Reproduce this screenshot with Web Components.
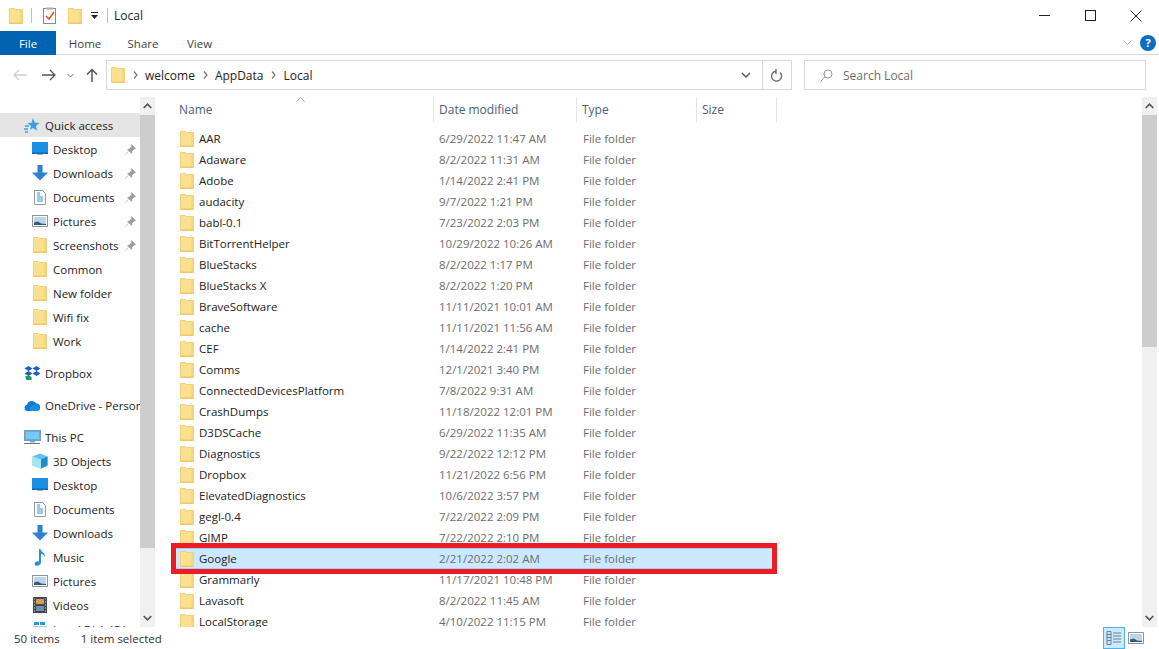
<!DOCTYPE html>
<html><head><meta charset="utf-8">
<style>
html,body{margin:0;padding:0;background:#fff;overflow:hidden}
body{font-family:"Open Sans","Noto Sans","Liberation Sans",sans-serif;font-size:11.5px;color:#1b1b1b}
fe-window{width:1159px;height:649px}
</style></head><body>
<fe-window></fe-window>
<script>
const ICONS={
folder:(w=14,h=18)=>`<svg width="${w}" height="${h}" viewBox="0 0 14 18"><path d="M.5 1.5h5l.8 1h7.2v14H.5z" fill="#fbe08f" stroke="#efd27e"/><path d="M11.5 3v13.5h2V3z" fill="#f6d478"/><path d="M.5 15.5h13v1.5H.5z" fill="#eec766"/></svg>`,
star:`<svg width="16" height="16" viewBox="0 0 16 16"><path d="M9 1l1.8 4.6 4.7.3-3.6 3 1.2 4.8L9 11l-2 1.3-1 .2L7 9 3.5 6l4-.3z" fill="#3b9fe8"/><path d="M1 9h4M0 12h4M1 15h3" stroke="#3b9fe8" stroke-width="1.4"/></svg>`,
desktop:`<svg width="16" height="14" viewBox="0 0 16 14"><rect width="16" height="11.5" fill="#1a8fe6"/><rect y="10.5" width="16" height="1.5" fill="#0c6cb8"/><rect x="5" y="12" width="6" height="1" fill="#7fb5dd"/></svg>`,
down:`<svg width="16" height="16" viewBox="0 0 16 16"><path d="M5.5 0h5v7.5H16L8 15.5 0 7.5h5.500z" fill="#2f7fd0"/></svg>`,
doc:`<svg width="12" height="15" viewBox="0 0 12 15"><path d="M.5.500h8l3 3v11H.5z" fill="#fff" stroke="#8d99a6"/><path d="M3 5h3M3 7h6M3 9h6M3 11h6" stroke="#3a8fd6"/><path d="M3 3h3" stroke="#3a8fd6"/></svg>`,
pic:`<svg width="16" height="12" viewBox="0 0 16 12"><rect x=".5" y=".5" width="15" height="11" fill="#fff" stroke="#8f979f"/><rect x="2" y="2" width="12" height="8" fill="#bcd5ec"/><path d="M2 10V7.500l4-1 3 2 5 .5v1z" fill="#36597c"/></svg>`,
pin:`<svg width="11" height="11" viewBox="0 0 11 11"><path d="M6.500.500l4 4-1.500.5-2.200 2.400-.3 2-4-4 2-.3L6.900 2.400zM3 7.500L.5 10.500" fill="#9b9b9b" stroke="#9b9b9b" stroke-width=".7"/></svg>`,
dropbox:`<svg width="17" height="14" viewBox="0 0 17 14"><path d="M4.500 0l4 2.500-4 2.500-4-2.500zM12.500 0l4 2.500-4 2.500-4-2.500zM4.500 5l4 2.500-4 2.500-4-2.500zM12.500 5l4 2.500-4 2.500-4-2.500z" fill="#1f5fc4"/><path d="M1 10.500l3.500-1 3 1.500v3H2.500z" fill="#1d9a56"/></svg>`,
cloud:`<svg width="17" height="11" viewBox="0 0 17 11"><path d="M3.500 11A3.200 3.200 0 0 1 3 4.700 5 5 0 0 1 12.200 3.600 3.800 3.800 0 0 1 13.500 11z" fill="#0f78d4"/><path d="M7 11a2.400 2.400 0 0 1 .5-4.500 4 4 0 0 1 5-1.500 3.200 3.200 0 0 1 1 6z" fill="#1c8fe3"/></svg>`,
pc:`<svg width="17" height="15" viewBox="0 0 17 15"><rect x=".5" y=".5" width="16" height="10" fill="#4fb1f0" stroke="#7c9cb5"/><rect x="2" y="2" width="13" height="7" fill="#79c8f7"/><path d="M6 11h5v1.500H6z" fill="#8ea3b4"/><path d="M0 13.500h16" stroke="#5f7890"/></svg>`,
cube:`<svg width="16" height="16" viewBox="0 0 16 16"><path d="M8 .5l7.500 3v9L9 15.500 .5 12.500v-9z" fill="#5cc4ec"/><path d="M.5 3.500l8.500 3v9l-8.500-3z" fill="#a5e3f5"/><path d="M9 6.500l6.500-3v9L9 15.500z" fill="#1a8ec9"/></svg>`,
music:`<svg width="12" height="17" viewBox="0 0 12 17"><path d="M5 0h1.500c.3 3 5 3.500 4.500 8-.8-2-2.500-3-4-3.500V13c0 2.500-2 3.800-4 3.800S0 15.500.8 14c.8-1.500 2.800-2 4.200-1.500z" fill="#2a8fe0"/></svg>`,
video:`<svg width="14" height="16" viewBox="0 0 14 16"><rect width="14" height="16" fill="#3c4751"/><rect x="3" y="2" width="8" height="5" fill="#d99c4a"/><rect x="3" y="9" width="8" height="5" fill="#6f8fa8"/><path d="M1 2h1M1 5h1M1 8h1M1 11h1M1 14h1M12 2h1M12 5h1M12 8h1M12 11h1M12 14h1" stroke="#ddd"/></svg>`,
disk:`<svg width="16" height="14" viewBox="0 0 16 14"><rect x="1" y="4" width="14" height="8" fill="#b9c4cc"/><path d="M2 0h5v3H2zM8 0h5v3H8z" fill="#2a9be0"/></svg>`
};
function def(name,css,html,extra){
  customElements.define(name,class extends HTMLElement{
    constructor(){super();const s=this.attachShadow({mode:'open'});s.innerHTML=`<style>${css}</style>${typeof html==='function'?html(this):html}`;}
    connectedCallback(){if(extra)extra(this)}
  });
}
def('fe-icon',':host{display:inline-flex;align-items:center;justify-content:center;flex:none}','',el=>{
  const n=el.getAttribute('name');const v=ICONS[n];el.shadowRoot.innerHTML+=typeof v==='function'?v():v;
});
def('fe-titlebar',`
:host{display:flex;height:31px;align-items:center;padding-left:9px;box-sizing:border-box;color:#222}
.sep{width:1px;height:15px;background:#bfbfbf}
.title{margin-left:6px;font-size:12px;position:relative}
.win{margin-left:auto;display:flex;height:31px}
.win span{width:46px;display:flex;align-items:center;justify-content:center}
`,`
<fe-icon name="folder"></fe-icon><span class="sep" style="margin-left:8px"></span>
<svg style="margin-left:11px" width="14" height="17" viewBox="0 0 14 17"><rect x=".5" y="1.500" width="12" height="15" fill="#fff" stroke="#8a8a8a"/><rect x="3" y=".5" width="7" height="2" fill="#aaa"/><path d="M3 9l3 3 5-7" fill="none" stroke="#d0542b" stroke-width="1.500"/></svg>
<fe-icon name="folder" style="margin-left:11px"></fe-icon>
<svg style="margin-left:8px" width="9" height="9" viewBox="0 0 9 9"><path d="M1 1.500h7" stroke="#222"/><path d="M1 4h7L4.500 8z" fill="#222"/></svg>
<span class="sep" style="margin-left:8px"></span>
<span class="title"><slot></slot></span>
<div class="win">
<span><svg width="11" height="11" viewBox="0 0 11 11"><path d="M0 5.500h11" stroke="#222"/></svg></span>
<span><svg width="11" height="11" viewBox="0 0 11 11"><rect x=".5" y=".5" width="10" height="10" fill="none" stroke="#222"/></svg></span>
<span><svg width="12" height="12" viewBox="0 0 12 12"><path d="M.5.5l11 11M11.500.5l-11 11" stroke="#222"/></svg></span>
</div>`);
def('fe-ribbon',`
:host{display:flex;height:24px;box-sizing:border-box;border-bottom:1px solid #dadada;align-items:stretch}
.file{width:56px;background:#0063b1;color:#fff;display:flex;align-items:center;justify-content:center;height:24px}
.tab{display:flex;align-items:center;justify-content:center;color:#444;height:24px}
.r{margin-left:auto;display:flex;align-items:center;padding-right:3px;gap:8px;height:24px}
`,`
<div class="file">File</div>
<div class="tab" style="width:58px">Home</div>
<div class="tab" style="width:58px">Share</div>
<div class="tab" style="width:55px">View</div>
<div class="r"><svg width="9" height="6" viewBox="0 0 9 6"><path d="M.5.500l4 4 4-4" fill="none" stroke="#b5b5b5"/></svg>
<svg width="16" height="16" viewBox="0 0 16 16"><circle cx="8" cy="8" r="8" fill="#0f6cc4"/><text x="8" y="12" text-anchor="middle" font-family="Open Sans" font-weight="700" font-size="11" fill="#fff">?</text></svg></div>`);
def('fe-crumb',`:host{display:inline-flex;align-items:center;color:#222;font-size:12px}
svg{margin:0 7px 0 8px}`,`<svg width="5" height="8" viewBox="0 0 5 8"><path d="M1 .5l3 3.500-3 3.500" fill="none" stroke="#777" stroke-width="1.200"/></svg><slot></slot>`);
def('fe-addressbar',`
:host{display:flex;height:42px;box-sizing:border-box;align-items:flex-start;padding-top:5px}
.nav{width:106px;height:30px;display:flex;align-items:center;flex:none}
.box{height:30px;width:686px;box-sizing:border-box;border:1px solid #d9d9d9;display:flex;align-items:center;flex:none}
.crumbs{display:flex;align-items:center;flex:1;padding-left:4px}
.dd{width:34px;height:28px;display:flex;align-items:center;justify-content:center;border-right:1px solid #d9d9d9;box-sizing:border-box}
.ref{width:28px;display:flex;align-items:center;justify-content:center}
.search{margin-left:12px;width:342px;height:30px;box-sizing:border-box;border:1px solid #d9d9d9;display:flex;align-items:center;color:#6d6d6d;font-size:12px;padding-left:15px;gap:10px}
`,`
<div class="nav">
<svg style="margin-left:13px" width="14" height="12" viewBox="0 0 14 12"><path d="M14 6H1.500M6 1L1 6l5 5" fill="none" stroke="#cfcfcf" stroke-width="1.300"/></svg>
<svg style="margin-left:15px" width="14" height="12" viewBox="0 0 14 12"><path d="M0 6h12.500M8 1l5 5-5 5" fill="none" stroke="#555" stroke-width="1.300"/></svg>
<svg style="margin-left:11px" width="7" height="5" viewBox="0 0 7 5"><path d="M.5 1l3 3 3-3" fill="none" stroke="#777"/></svg>
<svg style="margin-left:12px" width="12" height="14" viewBox="0 0 12 14"><path d="M6 14V1.500M1 6.500l5-5 5 5" fill="none" stroke="#555" stroke-width="1.500"/></svg>
</div>
<div class="box"><div class="crumbs"><fe-icon name="folder"></fe-icon><fe-crumb style="margin-left:0">welcome</fe-crumb><fe-crumb>AppData</fe-crumb><fe-crumb>Local</fe-crumb></div>
<div class="dd"><svg width="10" height="6" viewBox="0 0 10 6"><path d="M1 1l4 4 4-4" fill="none" stroke="#555" stroke-width="1.400"/></svg></div>
<div class="ref"><svg width="12" height="13" viewBox="0 0 12 13"><path d="M9 3.500a5 5 0 1 1-4-1.300M5 0v4.500h.5" fill="none" stroke="#666" stroke-width="1.300"/></svg></div></div>
<div class="search"><svg width="13" height="13" viewBox="0 0 13 13"><circle cx="8" cy="5" r="4" fill="none" stroke="#999"/><path d="M5 8L.5 12.500" stroke="#999"/></svg><span>Search Local</span></div>`);
def('fe-scrollbar',`
:host{display:flex;flex-direction:column;width:15px;flex:none;background:#f0f0f0}
.b{height:18px;display:flex;align-items:center;justify-content:center;flex:none;background:#f0f0f0}
.th{background:#cdcdcd;flex:none}
.t{flex:1}
`,el=>`<div class="b"><svg width="9" height="6" viewBox="0 0 9 6"><path d="M.7 5l3.800-3.800L8.300 5" fill="none" stroke="#505050" stroke-width="1.600"/></svg></div>
<div class="th" style="height:${el.getAttribute('thumb')}px"></div><div class="t"></div>
<div class="b"><svg width="9" height="6" viewBox="0 0 9 6"><path d="M.7 1l3.800 3.800L8.300 1" fill="none" stroke="#505050" stroke-width="1.600"/></svg></div>`);
def('fe-navitem',`
:host{display:flex;height:24px;align-items:center;white-space:nowrap;overflow:hidden;color:#222;flex:none;position:relative}
:host([sel]){background:#e5e5e5}
.ic{width:24px;display:flex;justify-content:center;flex:none}
:host([lv="0"]) .ic{margin-left:20px;margin-right:1px}
:host([lv="1"]) .ic{margin-left:28px;margin-right:1px}
.pin{position:absolute;left:125px;top:7px;display:flex}
`,el=>`<span class="ic"><fe-icon name="${el.getAttribute('icon')}"></fe-icon></span><slot></slot>${el.hasAttribute('pin')?'<span class="pin"><fe-icon name="pin"></fe-icon></span>':''}`);
def('fe-nav',`
:host{display:flex;width:157px;flex:none;height:100%;padding-right:2px;box-sizing:border-box;overflow:hidden}
.list{width:140px;padding-top:16px;display:flex;flex-direction:column;overflow:hidden;flex:none}
.gap{height:8px;flex:none}
`,()=>{
 const q=[['desktop','Desktop',1],['down','Downloads',1],['doc','Documents',1],['pic','Pictures',1],['folder','Screenshots',1],['folder','Common'],['folder','New folder'],['folder','Wifi fix'],['folder','Work']];
 const p=[['cube','3D Objects'],['desktop','Desktop'],['doc','Documents'],['down','Downloads'],['music','Music'],['pic','Pictures'],['video','Videos'],['disk','Local Disk (C:)']];
 const r=(a)=>a.map(x=>`<fe-navitem lv="1" icon="${x[0]}" ${x[2]?'pin':''}>${x[1]}</fe-navitem>`).join('');
 return `<div class="list"><fe-navitem lv="0" sel icon="star">Quick access</fe-navitem>${r(q)}<div class="gap"></div><fe-navitem lv="0" icon="dropbox">Dropbox</fe-navitem><div class="gap"></div><fe-navitem lv="0" icon="cloud">OneDrive - Personal</fe-navitem><div class="gap"></div><fe-navitem lv="0" icon="pc">This PC</fe-navitem>${r(p)}</div><fe-scrollbar thumb="433"></fe-scrollbar>`;
});
def('fe-row',`
:host{display:grid;grid-template-columns:266px 144px 1fr;height:21px;align-items:center;box-sizing:border-box;width:603px;flex:none;white-space:nowrap;color:#6d6d6d;border:1px solid transparent}
:host([sel]){background:#cce8ff;border-color:#99d1ff}
.n{display:flex;align-items:center;color:#222;padding-left:7px}
.n fe-icon{margin-right:5px}
`,el=>`<div class="n"><fe-icon name="folder"></fe-icon>${el.getAttribute('n')}</div><div>${el.getAttribute('d')}</div><div>File folder</div>`);
def('fe-header',`
:host{display:flex;height:25px;align-items:center;color:#4c607a;flex:none;padding-left:2px;position:relative;font-size:12px}
.c{box-sizing:border-box;height:25px;display:flex;align-items:center;padding-left:5px;border-right:1px solid #e5e5e5;flex:none}
.caret{position:absolute;left:124px;top:0}
`,`<div class="c" style="width:260px">Name</div><div class="c" style="width:143px">Date modified</div><div class="c" style="width:120px">Type</div><div class="c" style="width:80px">Size</div>
<svg class="caret" width="9" height="5" viewBox="0 0 9 5"><path d="M.5 4.500l4-4 4 4" fill="none" stroke="#9aa3ad"/></svg>`);
const DATA=`AAR|6/29/2022 11:47 AM
Adaware|8/2/2022 11:31 AM
Adobe|1/14/2022 2:41 PM
audacity|9/7/2022 1:21 PM
babl-0.1|7/23/2022 2:03 PM
BitTorrentHelper|10/29/2022 10:26 AM
BlueStacks|8/2/2022 1:17 PM
BlueStacks X|8/2/2022 1:20 PM
BraveSoftware|11/11/2021 10:01 AM
cache|11/11/2021 11:56 AM
CEF|1/14/2022 2:41 PM
Comms|12/1/2021 3:40 PM
ConnectedDevicesPlatform|7/8/2022 9:31 AM
CrashDumps|11/18/2022 12:01 PM
D3DSCache|6/29/2022 11:35 AM
Diagnostics|9/22/2022 12:12 PM
Dropbox|11/21/2022 6:56 PM
ElevatedDiagnostics|10/6/2022 3:57 PM
gegl-0.4|7/22/2022 2:09 PM
GIMP|7/22/2022 2:10 PM
Google|2/21/2022 2:02 AM
Grammarly|11/17/2021 10:48 PM
Lavasoft|8/2/2022 11:45 AM
LocalStorage|4/10/2022 11:15 PM`.split('\n').map(l=>l.split('|'));
def('fe-list',`
:host{display:flex;flex-direction:column;flex:1;overflow:hidden;height:100%;padding-left:15px;position:relative;min-width:0}
.rows{display:flex;flex-direction:column;padding-top:6px;overflow:hidden;flex:1}
.mark{position:absolute;left:14px;top:446px;width:606px;height:31px;box-sizing:border-box;border:5px solid #ed1c24}
`,()=>`<fe-header></fe-header><div class="rows">${DATA.map(d=>`<fe-row n="${d[0]}" d="${d[1]}" ${d[0]==='Google'?'sel':''}></fe-row>`).join('')}</div><div class="mark"></div>`);
def('fe-status',`
:host{display:flex;height:22px;align-items:center;padding-left:14px;color:#333;position:relative;flex:none}
.v{margin-left:auto;display:flex;align-items:center;margin-right:12px;height:22px}
.d{width:22px;height:22px;box-sizing:border-box;background:#cce8ff;border:1px solid #4fb3e8;display:flex;align-items:center;justify-content:center}
.t{width:22px;display:flex;justify-content:center}
`,`<span>50 items</span><span style="margin-left:21px">1 item selected</span>
<div class="v"><div class="d"><svg width="16" height="14" viewBox="0 0 16 14"><path d="M1 .500h4v13H1zM1 3.500h4M1 6.500h4M1 9.500h4M7 2h8M7 5h8M7 8h8M7 11h8" fill="none" stroke="#6a7d8e"/></svg></div>
<div class="t"><fe-icon name="pic"></fe-icon></div></div>`);
def('fe-window',`
:host{display:flex;flex-direction:column;overflow:hidden;background:#fff}
.main{display:flex;height:530px;flex:none}
.rsb{margin-right:2px}
`,`<fe-titlebar>Local</fe-titlebar><fe-ribbon></fe-ribbon><fe-addressbar></fe-addressbar>
<div class="main"><fe-nav></fe-nav><fe-list></fe-list><fe-scrollbar class="rsb" thumb="232"></fe-scrollbar></div><fe-status></fe-status>`);
</script>
</body></html>
